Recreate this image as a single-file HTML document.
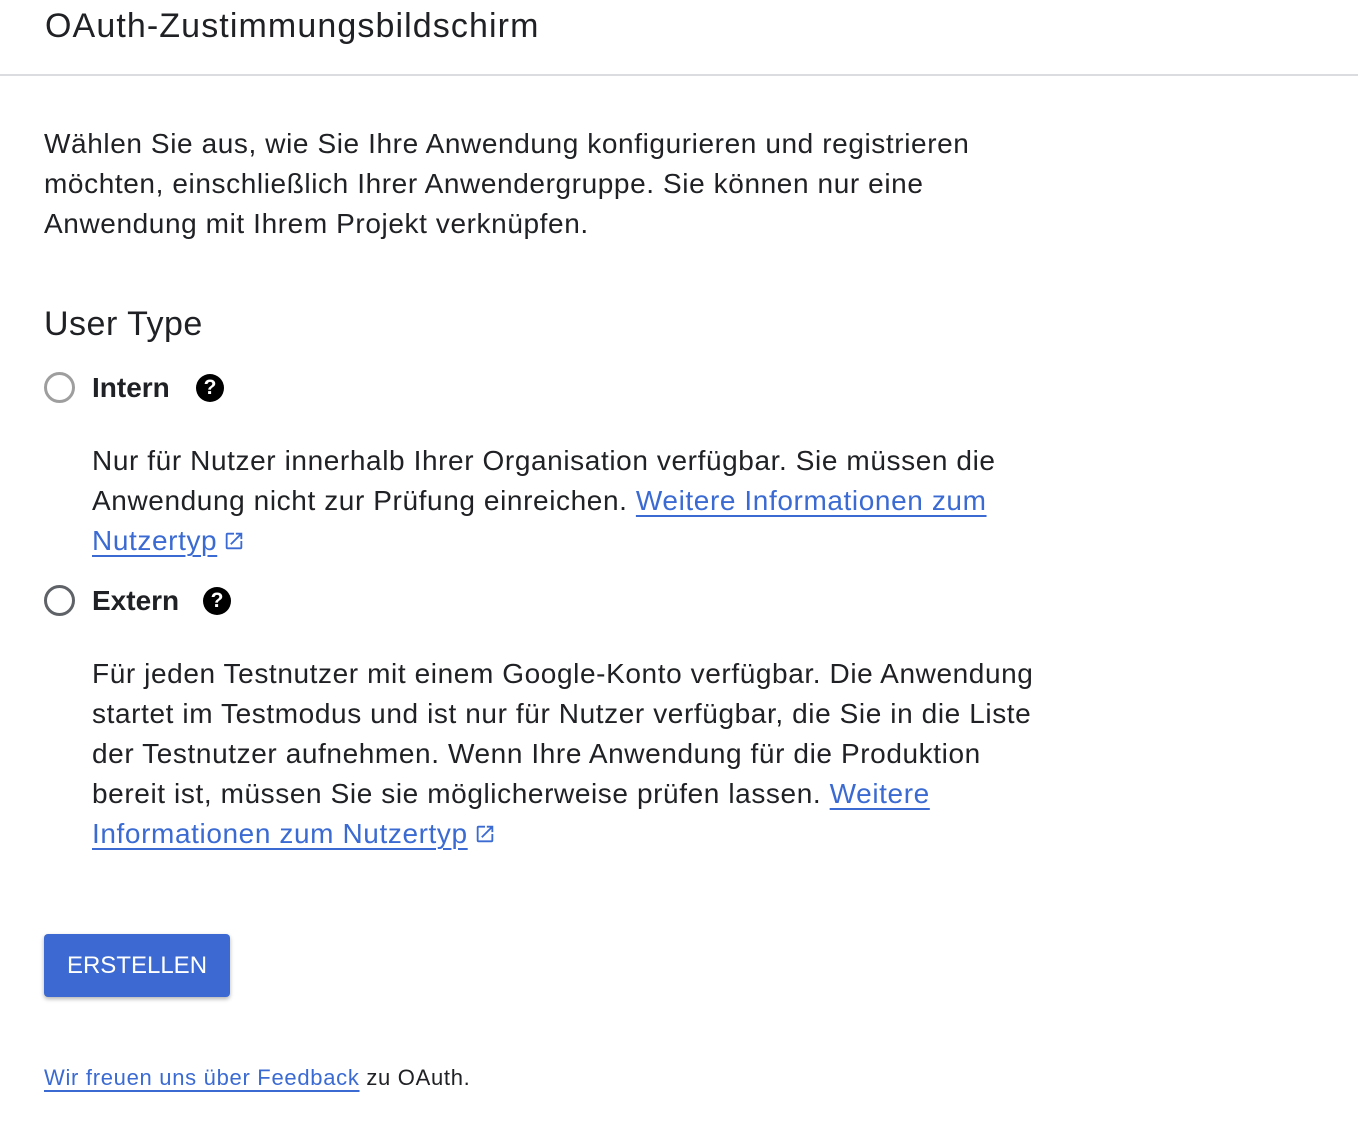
<!DOCTYPE html>
<html><head><meta charset="utf-8"><style>
body{margin:0;width:1358px;height:1130px;background:#fff;font-family:"Liberation Sans",Arial,sans-serif;color:#202124;position:relative;overflow:hidden}
.a{position:absolute;white-space:nowrap}
.t{font-size:28px;line-height:40px;letter-spacing:0.6px}
a{color:#3b6bd2;text-decoration:underline;text-underline-offset:5px;text-decoration-thickness:2px}
.r{position:absolute;width:31px;height:31px;border:3px solid #9e9e9e;border-radius:50%;box-sizing:border-box}
.q{position:absolute;width:28px;height:28px;border-radius:50%;background:#000;color:#fff;font-weight:bold;font-size:21px;text-align:center;line-height:28px}
.ext{display:inline-block;vertical-align:-2px;margin-left:6px}
</style></head><body>
<div class="a" style="left:45px;top:4px;font-size:34px;line-height:44px;letter-spacing:1.1px">OAuth-Zustimmungsbildschirm</div>
<div style="position:absolute;left:0;top:74px;width:1358px;height:2px;background:#dadce0"></div>
<div class="a t" style="left:44px;top:124px">Wählen Sie aus, wie Sie Ihre Anwendung konfigurieren und registrieren<br>möchten, einschließlich Ihrer Anwendergruppe. Sie können nur eine<br>Anwendung mit Ihrem Projekt verknüpfen.</div>
<div class="a" style="left:44px;top:302px;font-size:34px;line-height:44px;letter-spacing:0.5px">User Type</div>
<div class="r" style="left:44px;top:372px"></div>
<div class="a" style="left:92px;top:368px;font-size:28px;line-height:40px;font-weight:bold">Intern</div>
<div class="q" style="left:196px;top:374px">?</div>
<div class="a t" style="left:92px;top:441px">Nur für Nutzer innerhalb Ihrer Organisation verfügbar. Sie müssen die<br>Anwendung nicht zur Prüfung einreichen. <a>Weitere Informationen zum</a><br><a>Nutzertyp</a><svg class="ext" width="22" height="22" viewBox="0 0 24 24"><path d="M19 19H5V5h7V3H5a2 2 0 0 0-2 2v14a2 2 0 0 0 2 2h14a2 2 0 0 0 2-2v-7h-2v7zM14 3v2h3.6l-9.8 9.8 1.4 1.4L19 6.4V10h2V3h-7z" fill="#3b6bd2"/></svg></div>
<div class="r" style="left:44px;top:585px;border-color:#5f6368"></div>
<div class="a" style="left:92px;top:581px;font-size:28px;line-height:40px;font-weight:bold">Extern</div>
<div class="q" style="left:203px;top:587px">?</div>
<div class="a t" style="left:92px;top:654px">Für jeden Testnutzer mit einem Google-Konto verfügbar. Die Anwendung<br>startet im Testmodus und ist nur für Nutzer verfügbar, die Sie in die Liste<br>der Testnutzer aufnehmen. Wenn Ihre Anwendung für die Produktion<br>bereit ist, müssen Sie sie möglicherweise prüfen lassen. <a>Weitere</a><br><a>Informationen zum Nutzertyp</a><svg class="ext" width="22" height="22" viewBox="0 0 24 24"><path d="M19 19H5V5h7V3H5a2 2 0 0 0-2 2v14a2 2 0 0 0 2 2h14a2 2 0 0 0 2-2v-7h-2v7zM14 3v2h3.6l-9.8 9.8 1.4 1.4L19 6.4V10h2V3h-7z" fill="#3b6bd2"/></svg></div>
<div style="position:absolute;left:44px;top:934px;width:186px;height:63px;background:#3c69d2;border-radius:4px;box-shadow:0 2px 4px rgba(0,0,0,.3);color:#fff;font-size:24px;line-height:63px;text-align:center">ERSTELLEN</div>
<div class="a" style="left:44px;top:1062px;font-size:22px;line-height:32px;letter-spacing:0.7px"><a>Wir freuen uns über Feedback</a> zu OAuth.</div>
</body></html>
